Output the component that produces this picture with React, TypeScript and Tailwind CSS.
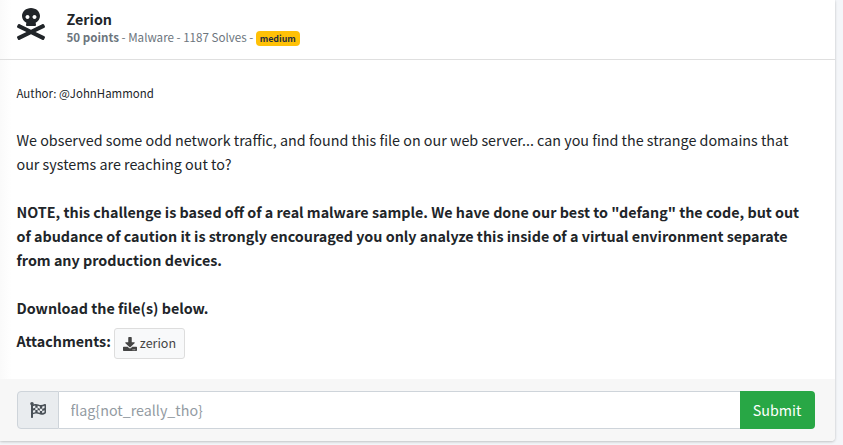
import React from "react";
import { FaDownload, FaFlagCheckered, FaSkullCrossbones } from "react-icons/fa";

function Header() {
  return (
    <header className="flex h-[60px] shrink-0 border-b border-[#dfdfdf] pl-[16.5px] text-[#212529]">
      <FaSkullCrossbones className="mt-2 h-8 w-7 shrink-0" />
      <div className="ml-[22px] pt-[7px]">
        <h1 className="h-6 text-[14.3px] leading-6 font-bold">Zerion</h1>
        <div className="-mt-[3px] flex h-[18px] items-center text-[11.6px] leading-[18px] text-[#6c757d]">
          <span className="whitespace-pre">
            <b>50 points</b> - Malware - 1187 Solves -{" "}
          </span>
          <span className="mt-[3px] flex h-[15px] w-11 items-center justify-center rounded bg-[#ffc107] text-[8.8px] font-bold text-[#1f2d3d]">
            medium
          </span>
        </div>
      </div>
    </header>
  );
}

function Description() {
  return (
    <main className="h-[319px] shrink-0 pt-[21px] pl-[16.5px] text-[14.32px] leading-6 text-[#212529]">
      <p className="text-[11.45px]">Author: @JohnHammond</p>
      <p className="mt-[23px] whitespace-nowrap">
        We observed some odd network traffic, and found this file on our web server... can you find the strange domains that
        <br />
        our systems are reaching out to?
      </p>
      <p className="mt-6 font-bold whitespace-nowrap">
        NOTE, this challenge is based off of a real malware sample. We have done our best to "defang" the code, but out
        <br />
        of abudance of caution it is strongly encouraged you only analyze this inside of a virtual environment separate
        <br />
        from any production devices.
      </p>
      <p className="mt-6 font-bold">Download the file(s) below.</p>
      <div className="mt-2 flex">
        <b className="mt-px">Attachments:</b>
        <button className="ml-[3px] flex h-[31px] w-[71px] items-center rounded-[3px] border border-[#dddddd] bg-[#f8f9fa] pl-2 text-[12.5px] text-[#444444]">
          <FaDownload className="mr-[3px] size-3.5" />
          <span className="-mt-0.5">zerion</span>
        </button>
      </div>
    </main>
  );
}

function FlagForm() {
  return (
    <footer className="h-[62px] shrink-0 rounded-br bg-[#f7f7f7] pt-3 pr-5 pl-[17px]">
      <div className="flex h-[38px] text-[14.3px]">
        <span className="flex w-[42px] shrink-0 items-center justify-center rounded-l border border-[#ced4da] bg-[#e9ecef] pr-px text-[#495057]">
          <FaFlagCheckered className="size-4" />
        </span>
        <input
          className="min-w-0 flex-1 border border-r-0 border-l-0 border-[#ced4da] bg-white pr-3 pl-[11.5px] text-[#495057] outline-none placeholder:text-[#939ba2]"
          placeholder="flag{not_really_tho}"
        />
        <button className="w-[75px] shrink-0 rounded-r bg-[#28a745] pr-px text-white">Submit</button>
      </div>
    </footer>
  );
}

export default function App() {
  return (
    <div className="h-[445px] overflow-hidden bg-[#f4f6f9] pr-2 font-['Noto_Sans_CJK_SC',sans-serif]">
      <div className="flex h-[441px] flex-col rounded-br bg-white bg-linear-to-r from-[#fafafa] to-white to-[12px] shadow-[0_0_1px_rgba(0,0,0,0.125),0_1px_3px_rgba(0,0,0,0.2)]">
        <Header />
        <Description />
        <FlagForm />
      </div>
    </div>
  );
}
